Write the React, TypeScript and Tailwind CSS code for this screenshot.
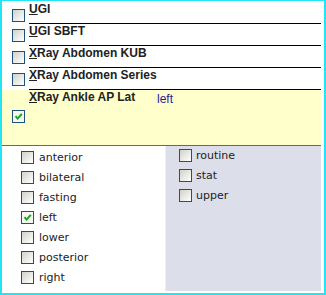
import React from "react";

const procedures = ["UGI", "UGI SBFT", "XRay Abdomen KUB", "XRay Abdomen Series"];
const leftMods = ["anterior", "bilateral", "fasting", "left", "lower", "posterior", "right"];
const rightMods = ["routine", "stat", "upper"];

function Box({ checked = false }: { checked?: boolean }) {
	return (
		<span
			className={`block w-[13px] h-[13px] shrink-0 border border-[#1c5180] ${
				checked ? "bg-[#f6f6f2]" : "bg-gradient-to-br from-[#d2d2ca] to-white"
			}`}
		>
			{checked && (
				<svg width="11" height="11" viewBox="0 0 11 11">
					<path d="M2.5 5.2 L4.6 7.6 L8.8 2.8" stroke="#21a121" strokeWidth="2" fill="none" />
				</svg>
			)}
		</span>
	);
}

function Label({ text }: { text: string }) {
	return (
		<span>
			<u>{text[0]}</u>
			{text.slice(1)}
		</span>
	);
}

export default function App() {
	return (
		<div
			className="w-[326px] h-[295px] bg-white border-[#22e4f2] border-t border-l-2 border-r-2 border-b-2 flex flex-col pr-[3px]"
			style={{ fontFamily: '"Liberation Sans", Arial, sans-serif' }}
		>
			{/* procedure list */}
			<div className="pt-[1px]">
				{procedures.map((p, i) => (
					<div key={p} className="flex h-[22px]">
						<div className={`w-[27px] pl-[10px] ${i === 0 ? "pt-[7px]" : "pt-[5px]"}`}>
							<Box />
						</div>
						<div className="flex-1 border-b border-black text-[12px] font-bold leading-[15px] text-[#222]">
							<Label text={p} />
						</div>
					</div>
				))}
				<div className="flex h-[55px] bg-[#ffffcc]">
					<div className="w-[27px] pl-[10px] pt-[20px]">
						<Box checked />
					</div>
					<div className="flex-1 flex items-start text-[12px] leading-[15px]">
						<span className="w-[128px] font-bold text-[#222]">
							<Label text="XRay Ankle AP Lat" />
						</span>
						<span className="mt-[2px] text-[#2a1c9c]">left</span>
					</div>
				</div>
			</div>
			<div className="h-px bg-[#5566a8]" />

			{/* modifiers */}
			<div
				className="flex flex-1 text-[11px] leading-[13px] text-[#222]"
				style={{ fontFamily: '"DejaVu Sans", Verdana, sans-serif' }}
			>
				<div className="w-[163px] pt-[5px] pl-[19px]">
					{leftMods.map((m) => (
						<div key={m} className="flex items-start h-[20px] gap-[5px]">
							<Box checked={m === "left"} />
							<span>{m}</span>
						</div>
					))}
				</div>
				<div className="flex-1 bg-[#dcdfea] pt-[3px] pl-[13px] mb-[2px] border-l border-[#eceef3]">
					{rightMods.map((m) => (
						<div key={m} className="flex items-start h-[20px] gap-[4px]">
							<Box />
							<span>{m}</span>
						</div>
					))}
				</div>
			</div>
		</div>
	);
}
